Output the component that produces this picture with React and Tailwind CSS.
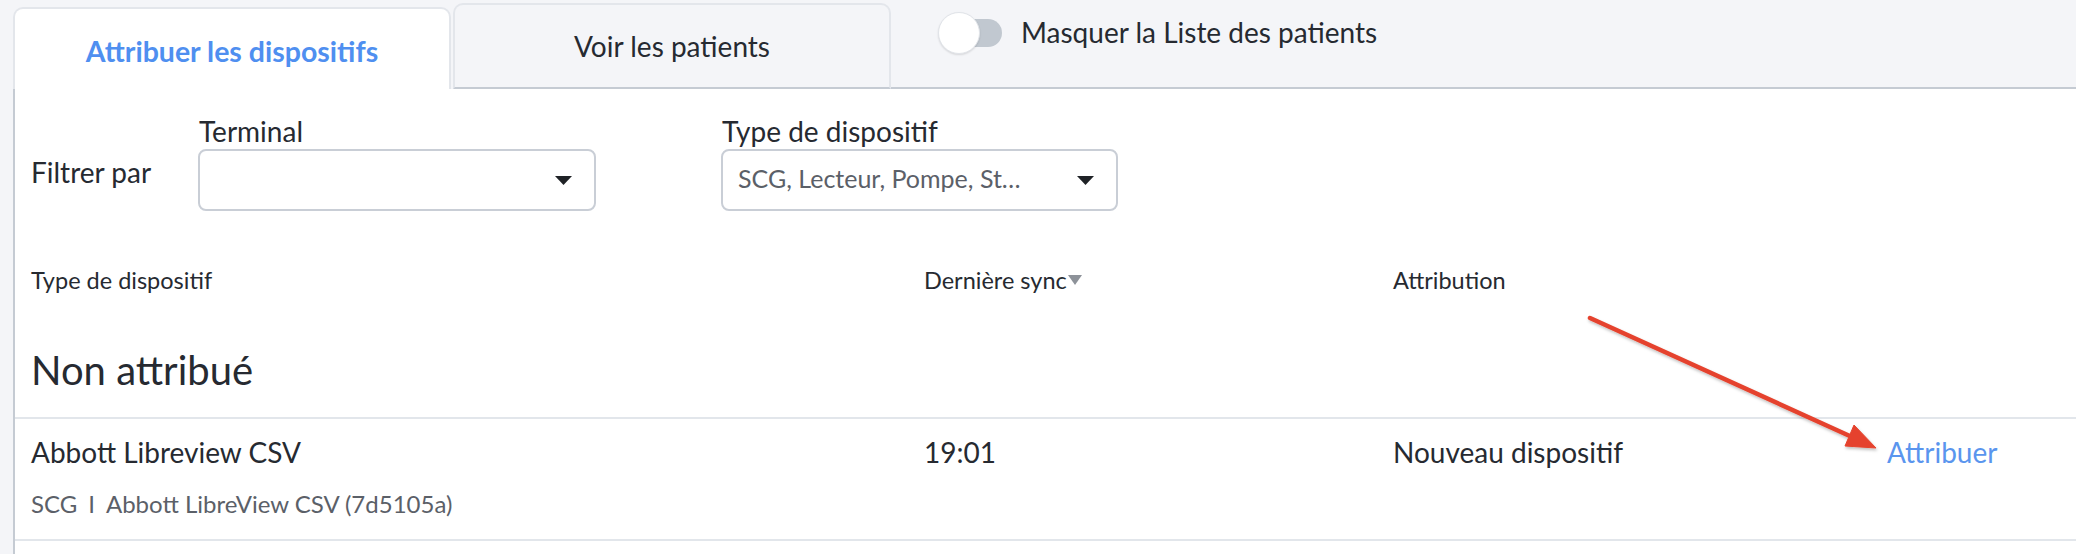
import React from 'react';

const Caret = ({ className = '' }) => (
  <svg className={className} width="17" height="9" viewBox="0 0 17 9">
    <path d="M0 0 H17 L8.5 9 Z" fill="#1f2226" />
  </svg>
);

const Select = ({ value, width }) => (
  <div
    className={`${width} h-[62px] border-2 border-[#c9ced6] rounded-[8px] bg-white flex items-center justify-between pl-[15px] pr-[22px]`}
  >
    <span className="pb-[5px] text-[25px] leading-[30px] text-[#5b6068] truncate">{value}</span>
    <Caret className="shrink-0" />
  </div>
);

const Arrow = () => (
  <svg className="absolute left-0 top-0 pointer-events-none" width="2076" height="554">
    <defs>
      <filter id="sh" x="-10%" y="-10%" width="130%" height="130%">
        <feDropShadow dx="1" dy="2" stdDeviation="1.5" floodColor="#000" floodOpacity="0.25" />
      </filter>
    </defs>
    <g filter="url(#sh)" fill="#e5432d" stroke="#e5432d">
      <line x1="1590" y1="318" x2="1852" y2="437" strokeWidth="4.5" strokeLinecap="round" />
      <path d="M1876 448 L1845 446 L1854 425 Z" strokeWidth="1" strokeLinejoin="round" />
    </g>
  </svg>
);

export default function App() {
  return (
    <div className="relative w-[2076px] h-[554px] overflow-hidden bg-[#f4f5f8] font-['Lato',sans-serif] text-[#262a31]">
      {/* tabs */}
      <div className="flex items-end h-[89px] pl-[13px]">
        <div className="w-[438px] h-[82px] bg-white border-2 border-b-0 border-[#e3e6eb] rounded-t-[10px] pt-[25px] text-center">
          <span className="text-[28.5px] leading-[34px] font-bold text-[#4f8ff0]">Attribuer les dispositifs</span>
        </div>
        <div className="ml-[2px] w-[438px] h-[86px] bg-[#f4f5f8] border-2 border-[#e3e6eb] border-b-[#c5cbd3] rounded-t-[10px] pt-[24px] text-center">
          <span className="text-[28px] leading-[34px]">Voir les patients</span>
        </div>
        <div className="flex-1 self-stretch border-b-2 border-[#c5cbd3] flex items-start pt-[12px] pl-[47px]">
          <div className="relative w-[64px] h-[42px] flex items-center">
            <div className="ml-[2px] w-[62px] h-[28px] rounded-full bg-[#c1c8d0]" />
            <div className="absolute left-0 top-0 w-[42px] h-[42px] rounded-full bg-white border border-[#e1e4e9] shadow-[0_1px_2px_rgba(0,0,0,0.12)]" />
          </div>
          <span className="ml-[19px] mt-[3px] text-[28px] leading-[34px]">Masquer la Liste des patients</span>
        </div>
      </div>

      {/* panel */}
      <div className="ml-[13px] h-[465px] bg-white border-l-2 border-[#c5cbd3]">
        <div className="flex items-end pt-[25px] pl-[16px]">
          <div className="w-[167px] mb-[22px] text-[28px] leading-[34px]">Filtrer par</div>
          <div>
            <div className="mb-[1px] pl-[1px] text-[28px] leading-[34px]">Terminal</div>
            <Select value="" width="w-[398px]" />
          </div>
          <div className="ml-[125px]">
            <div className="mb-[1px] pl-[1px] text-[28px] leading-[34px]">Type de dispositif</div>
            <Select value="SCG, Lecteur, Pompe, St…" width="w-[397px]" />
          </div>
        </div>

        <div className="flex mt-[55px] pl-[16px] text-[23.5px] leading-[28px]">
          <div className="w-[893px]">Type de dispositif</div>
          <div className="w-[469px] flex items-center">
            Dernière sync
            <svg className="ml-[1px]" width="14" height="10" viewBox="0 0 14 10">
              <path d="M0 0 H14 L7 10 Z" fill="#8d9299" />
            </svg>
          </div>
          <div>Attribution</div>
        </div>

        <div className="mt-[52px] pl-[16px] h-[71px] text-[40px] leading-[48px]">Non attribué</div>

        <div className="border-t-2 border-b-2 border-[#e2e6eb] pl-[16px] pt-[16px] pb-[21px]">
          <div className="flex text-[28px] leading-[34px]">
            <div className="w-[893px]">Abbott Libreview CSV</div>
            <div className="w-[469px]">19:01</div>
            <div className="w-[494px]">Nouveau dispositif</div>
            <div className="text-[#5a95ee]">Attribuer</div>
          </div>
          <div className="mt-[21px] text-[24px] leading-[28px] text-[#5b6068]">
            SCG<span className="mx-[11px]">I</span>Abbott LibreView CSV (7d5105a)
          </div>
        </div>
      </div>

      <Arrow />
    </div>
  );
}
